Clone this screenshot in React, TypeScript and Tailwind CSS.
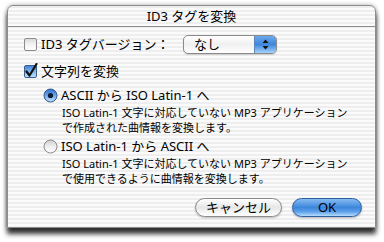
import React from "react";

const font = { fontFamily: '"Noto Sans", "Noto Sans CJK JP", sans-serif' };

function Checkbox({ checked }: { checked?: boolean }) {
  return (
    <svg width="16" height="16" viewBox="0 0 16 16" className="shrink-0">
      <defs>
        <linearGradient id="cbw" x1="0" y1="0" x2="0" y2="1">
          <stop offset="0" stopColor="#d8d8d8" />
          <stop offset="0.5" stopColor="#f4f4f4" />
          <stop offset="1" stopColor="#ffffff" />
        </linearGradient>
        <linearGradient id="cbb" x1="0" y1="0" x2="0" y2="1">
          <stop offset="0" stopColor="#3e7fd6" />
          <stop offset="0.5" stopColor="#7fb5ee" />
          <stop offset="1" stopColor="#c4e2ff" />
        </linearGradient>
      </defs>
      <rect x="1.5" y="2.5" width="12" height="12" rx="1.5" fill={checked ? "url(#cbb)" : "url(#cbw)"} stroke={checked ? "#3a5f8c" : "#8a8a8a"} />
      {checked && (
        <path d="M3.5 8.5 L6.5 12.5 L13.5 1" fill="none" stroke="#111" strokeWidth="2.2" strokeLinecap="round" strokeLinejoin="round" />
      )}
    </svg>
  );
}

function Radio({ checked }: { checked?: boolean }) {
  return (
    <svg width="15" height="15" viewBox="0 0 15 15" className="shrink-0">
      <defs>
        <linearGradient id="rdw" x1="0" y1="0" x2="0" y2="1">
          <stop offset="0" stopColor="#cfcfcf" />
          <stop offset="0.5" stopColor="#eeeeee" />
          <stop offset="1" stopColor="#ffffff" />
        </linearGradient>
        <linearGradient id="rdb" x1="0" y1="0" x2="0" y2="1">
          <stop offset="0" stopColor="#2f6fc9" />
          <stop offset="0.5" stopColor="#6aa6ea" />
          <stop offset="1" stopColor="#c8e4ff" />
        </linearGradient>
      </defs>
      <circle cx="7.5" cy="7.5" r="6.5" fill={checked ? "url(#rdb)" : "url(#rdw)"} stroke={checked ? "#34598a" : "#8a8a8a"} />
      {checked && <circle cx="7.5" cy="7.5" r="2.6" fill="#0d1b33" />}
    </svg>
  );
}

export default function App() {
  return (
    <div className="w-[384px] h-[242px] bg-white pl-[7px] pt-[5px] text-black" style={font}>
      <div className="w-[369px] h-[223px] rounded-t-[6px] border border-[#8c8c8c] shadow-[0_6px_5px_rgba(0,0,0,0.8),0_0_4px_rgba(0,0,0,0.35)] bg-[image:repeating-linear-gradient(180deg,#eeeeee_0px,#eeeeee_2px,#fbfbfb_2px,#fbfbfb_4px)] flex flex-col overflow-hidden">
        <div className="h-[21px] shrink-0 border-b border-[#8e8e8e] flex items-center justify-center text-[13px] leading-none">
          ID3 タグを変換
        </div>
        <div className="flex flex-col pl-[15px] pt-[7px] pr-[13px]">
          <div className="flex items-center h-[20px]">
            <div className="flex items-center w-[160px]">
              <Checkbox />
              <span className="ml-[2px] text-[13px] leading-none">ID3 タグバージョン：</span>
            </div>
            <div className="flex h-[19px] w-[94px] rounded-[5px] border border-[#8a8a8a] overflow-hidden bg-[linear-gradient(180deg,#ffffff,#f0f0f0_50%,#ffffff)] shadow-[0_1px_1px_rgba(0,0,0,0.15)]">
              <div className="flex-1 flex items-center pl-[10px] text-[13px] leading-none">なし</div>
              <div className="w-[22px] border-l border-[#5d86b8] bg-[linear-gradient(180deg,#6ea9ea,#3d86db_50%,#a6d2fa)] flex flex-col items-center justify-center gap-[2px]">
                <svg width="7" height="11" viewBox="0 0 7 11">
                  <path d="M3.5 0.5 L6.5 4 L0.5 4 Z" fill="#111" />
                  <path d="M3.5 10.5 L6.5 7 L0.5 7 Z" fill="#111" />
                </svg>
              </div>
            </div>
          </div>
          <div className="flex items-center h-[16px] mt-[9px]">
            <Checkbox checked />
            <span className="ml-[2px] text-[13px] leading-none">文字列を変換</span>
          </div>
          <div className="flex flex-col pl-[20px]">
            <div className="flex items-center h-[16px] mt-[8px]">
              <Radio checked />
              <span className="ml-[3px] text-[13px] leading-none">ASCII から ISO Latin-1 へ</span>
            </div>
            <div className="pl-[19px] mt-[2px] text-[11px] leading-[15px]">
              <div>ISO Latin-1 文字に対応していない MP3 アプリケーション</div>
              <div>で作成された曲情報を変換します。</div>
            </div>
            <div className="flex items-center h-[16px] mt-[3px]">
              <Radio />
              <span className="ml-[3px] text-[13px] leading-none">ISO Latin-1 から ASCII へ</span>
            </div>
            <div className="pl-[19px] mt-[2px] text-[11px] leading-[15px]">
              <div>ISO Latin-1 文字に対応していない MP3 アプリケーション</div>
              <div>で使用できるように曲情報を変換します。</div>
            </div>
          </div>
          <div className="flex justify-end gap-[10px] mt-[12px]">
            <div className="w-[87px] h-[19px] rounded-full border border-[#8a8a8a] bg-[linear-gradient(180deg,#ffffff,#e6e6e6_50%,#f4f4f4_75%,#ffffff)] shadow-[0_1px_2px_rgba(0,0,0,0.25)] flex items-center justify-center text-[13px] leading-none">
              キャンセル
            </div>
            <div className="w-[70px] h-[19px] rounded-full border border-[#2f5f9f] bg-[linear-gradient(180deg,#86bbf2,#3c86dc_50%,#5fa1ea_75%,#b4dcff)] shadow-[0_1px_2px_rgba(0,0,0,0.3)] flex items-center justify-center text-[13px] leading-none">
              OK
            </div>
          </div>
        </div>
      </div>
    </div>
  );
}
